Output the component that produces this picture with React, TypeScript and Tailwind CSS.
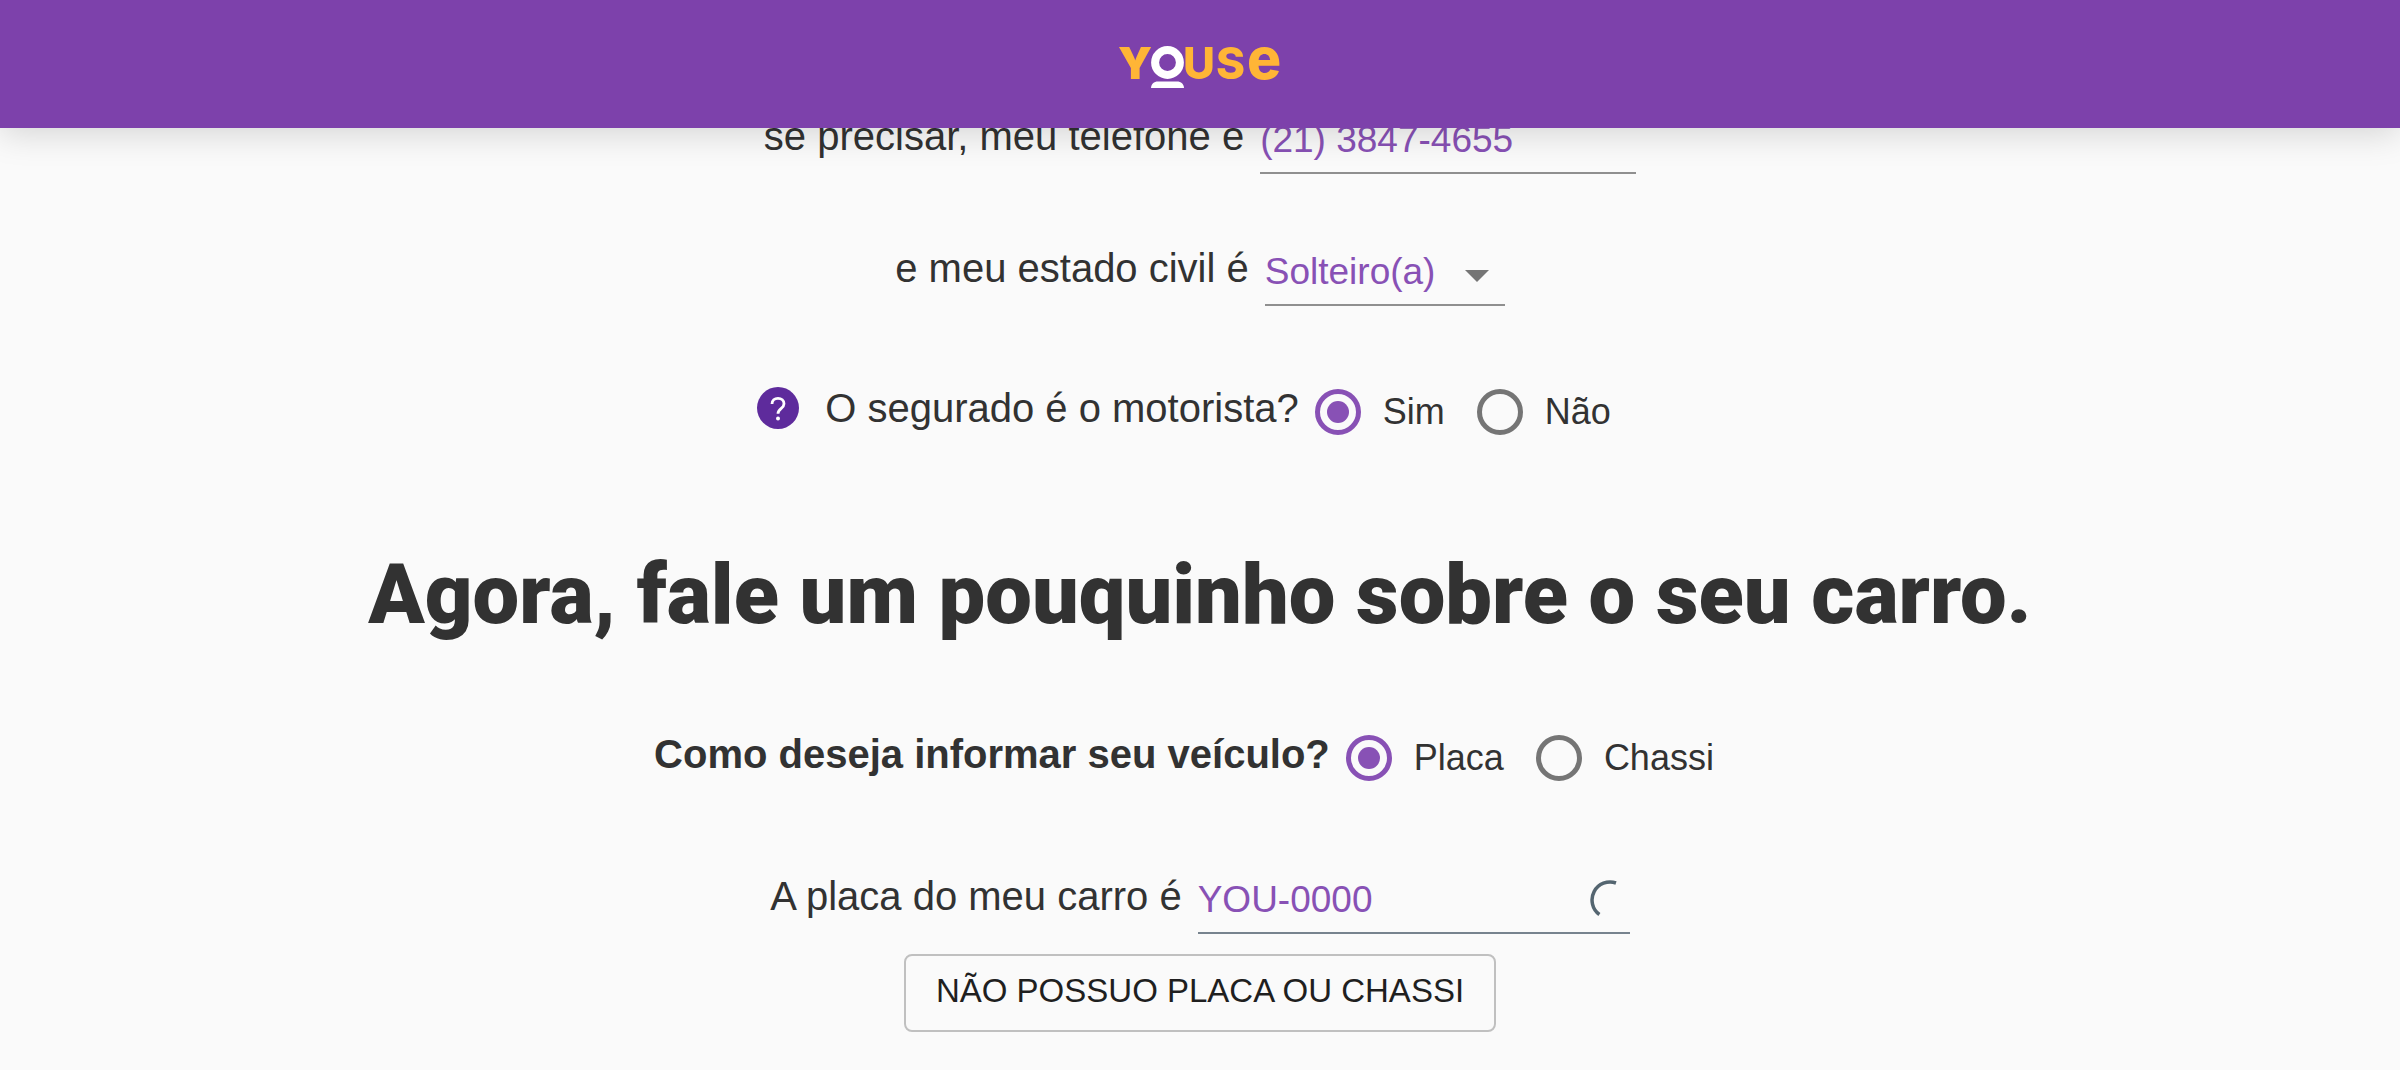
import { useState } from 'react';

function Logo() {
  return (
    <svg
      role="img"
      aria-label="Youse"
      viewBox="0 0 164 42"
      className="h-[42px] w-[164px] overflow-visible font-['Inter'] font-extrabold"
    >
      <g fill="#ffb536">
        <text x="0" y="33" fontSize="44" className="font-black">Y</text>
        <text x="65" y="33" fontSize="44">U</text>
        <text x="98" y="33" fontSize="44">S</text>
        <text x="129" y="33" fontSize="57">e</text>
      </g>
      <circle cx="49.5" cy="16.5" r="12.4" fill="none" stroke="#ffffff" strokeWidth="8" />
      <path d="M33 42c0-4 3-6.6 7-6.6h19c4 0 7 2.6 7 6.6z" fill="#ffffff" />
    </svg>
  );
}

function HelpIcon() {
  return (
    <svg viewBox="0 0 42 42" className="size-[42px]" fill="none" aria-hidden="true">
      <circle cx="21" cy="21" r="21" fill="#5e2b9c" />
      <path
        d="M15 17c0-3.5 2.6-5.7 6-5.7s6 2.2 6 5.4c0 2.5-1.4 3.7-3 5-1.8 1.4-3 2.6-3 5"
        stroke="#ffffff"
        strokeWidth="2.8"
      />
      <circle cx="21" cy="31.5" r="2" fill="#ffffff" />
    </svg>
  );
}

function Spinner() {
  return (
    <svg viewBox="0 0 40 40" className="size-10 shrink-0" fill="none" aria-hidden="true">
      <path d="M26 3A18 18 0 0 0 9.4 34.5" stroke="#546570" strokeWidth="3.5" />
    </svg>
  );
}

type RadioProps = {
  name: string;
  label: string;
  checked: boolean;
  onChange: () => void;
};

function Radio({ name, label, checked, onChange }: RadioProps) {
  return (
    <label className="mr-8 flex items-center gap-[22px] text-4xl">
      <input
        type="radio"
        name={name}
        checked={checked}
        onChange={onChange}
        className="grid size-[46px] appearance-none place-content-center rounded-full border-5 border-[#757575] checked:border-[#8851b5] checked:before:size-[22px] checked:before:rounded-full checked:before:bg-[#8851b5]"
      />
      {label}
    </label>
  );
}

type RadioGroupProps = { name: string; options: string[] };

function RadioGroup({ name, options }: RadioGroupProps) {
  const [value, setValue] = useState(options[0]);
  return (
    <div className="flex items-center pt-0.5">
      {options.map((option) => (
        <Radio
          key={option}
          name={name}
          label={option}
          checked={value === option}
          onChange={() => setValue(option)}
        />
      ))}
    </div>
  );
}

export default function App() {
  return (
    <div className="min-h-screen bg-[#fafafa] font-['Liberation_Sans',Arial,sans-serif] text-[#323232]">
      <header className="fixed inset-x-0 top-0 z-10 flex h-32 items-center justify-center bg-[#7d41ab] pt-1.5 shadow-[0_6px_32px_rgba(0,0,0,0.15)]">
        <Logo />
      </header>

      <main className="flex flex-col items-center pt-[110px]">
        <div className="flex h-16 items-center gap-4">
          <label htmlFor="phone" className="pb-3 text-[40px] leading-[48px]">
            se precisar, meu telefone é
          </label>
          <input
            id="phone"
            type="tel"
            defaultValue="(21) 3847-4655"
            className="h-16 w-[376px] border-b-2 border-[#8f8f8f] pb-0.5 text-[37px] text-[#8851b5] outline-none"
          />
        </div>

        <div className="mt-[68px] flex h-16 items-center gap-4">
          <label htmlFor="marital" className="pb-3 text-[40px] leading-[48px]">
            e meu estado civil é
          </label>
          <div className="relative">
            <select
              id="marital"
              defaultValue="Solteiro(a)"
              className="h-16 w-60 appearance-none border-b-2 border-[#8f8f8f] pb-0.5 text-[37px] text-[#8851b5] outline-none"
            >
              <option>Solteiro(a)</option>
              <option>Casado(a)</option>
            </select>
            <svg
              viewBox="0 0 24 12"
              className="pointer-events-none absolute top-7 right-4 h-3 w-6"
              aria-hidden="true"
            >
              <path d="M0 0h24L12 12z" fill="#757575" />
            </svg>
          </div>
        </div>

        <div className="mt-[73px] flex h-16 items-center">
          <button type="button" aria-label="Ajuda" className="mr-[26px] mb-1.5">
            <HelpIcon />
          </button>
          <p className="mr-4 pb-1.5 text-[40px] leading-[48px]">O segurado é o motorista?</p>
          <RadioGroup name="motorista" options={['Sim', 'Não']} />
        </div>

        <h1 className="mt-[104px] mb-[82px] font-['Roboto'] text-[83px] leading-[96px] font-black">
          Agora, fale um pouquinho sobre o seu carro.
        </h1>

        <div className="flex h-16 items-center">
          <p className="mr-4 pb-1.5 text-[40px] leading-[48px] font-bold">
            Como deseja informar seu veículo?
          </p>
          <RadioGroup name="veiculo" options={['Placa', 'Chassi']} />
        </div>

        <div className="mt-[81px] flex h-16 items-center gap-4">
          <label htmlFor="plate" className="pb-3 text-[40px] leading-[48px]">
            A placa do meu carro é
          </label>
          <div className="flex h-16 w-[432px] items-center border-b-2 border-[#77838e] pb-0.5">
            <input
              id="plate"
              defaultValue="YOU-0000"
              className="min-w-0 flex-1 text-[37px] text-[#8851b5] outline-none"
            />
            <Spinner />
          </div>
        </div>

        <button
          type="button"
          className="mt-5 h-[78px] rounded-lg border-2 border-[#c0c0c0] px-[30px] pb-1 text-[33px] text-[#1f1f1f]"
        >
          NÃO POSSUO PLACA OU CHASSI
        </button>
      </main>
    </div>
  );
}
